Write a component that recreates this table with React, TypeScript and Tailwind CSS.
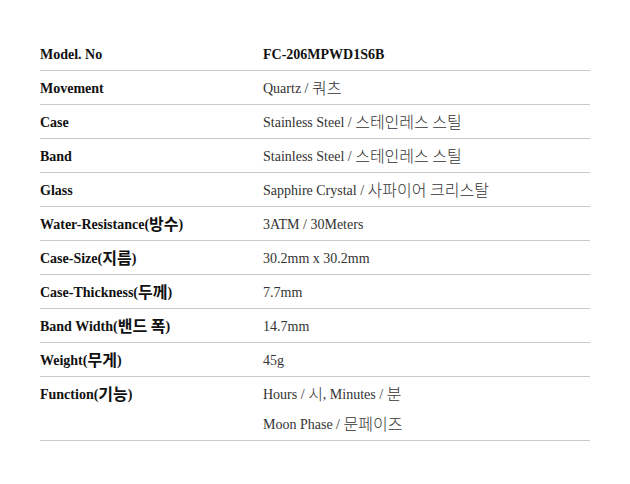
import React from "react";

const rows: [string, string][] = [
  ["Model. No", "FC-206MPWD1S6B"],
  ["Movement", "Quartz / 쿼츠"],
  ["Case", "Stainless Steel / 스테인레스 스틸"],
  ["Band", "Stainless Steel / 스테인레스 스틸"],
  ["Glass", "Sapphire Crystal / 사파이어 크리스탈"],
  ["Water-Resistance(방수)", "3ATM / 30Meters"],
  ["Case-Size(지름)", "30.2mm x 30.2mm"],
  ["Case-Thickness(두께)", "7.7mm"],
  ["Band Width(밴드 폭)", "14.7mm"],
  ["Weight(무게)", "45g"],
];

const font = { fontFamily: '"Liberation Serif", "Noto Sans CJK KR", serif' };

function T({ s, light }: { s: string; light?: boolean }) {
  const parts = s.split(/([\uAC00-\uD7A3]+(?: [\uAC00-\uD7A3]+)*)/);
  return (
    <>
      {parts.map((p, i) =>
        /[\uAC00-\uD7A3]/.test(p) ? (
          <span
            key={i}
            className={
              light
                ? "text-[16px] leading-none align-[-1px] font-light"
                : "text-[16px] leading-none align-[-1px]"
            }
            style={{ fontFamily: '"Noto Sans CJK KR", sans-serif' }}
          >
            {p}
          </span>
        ) : (
          <span key={i}>{p}</span>
        )
      )}
    </>
  );
}

export default function App() {
  return (
    <div className="w-[630px] h-[484px] bg-white pt-[37px] pl-[40px]" style={font}>
      <div className="w-[550px] flex flex-col">
        {rows.map(([k, v], i) => (
          <div key={k} className="flex h-[34px] border-b border-[#c8c8c8] items-center text-[14px] pt-[2px]">
            <div className="w-[223px] font-bold text-[#111]"><T s={k} /></div>
            <div className={i === 0 ? "font-bold text-[#111]" : "text-[#333]"}><T s={v} light /></div>
          </div>
        ))}
        <div className="flex border-b border-[#c8c8c8] pt-[3px] text-[14px]">
          <div className="w-[223px] font-bold text-[#111] leading-[30px]"><T s="Function(기능)" /></div>
          <div className="text-[#333] leading-[30px] flex flex-col">
            <div><T s="Hours / 시, Minutes / 분" light /></div>
            <div><T s="Moon Phase / 문페이즈" light /></div>
          </div>
        </div>
      </div>
    </div>
  );
}
